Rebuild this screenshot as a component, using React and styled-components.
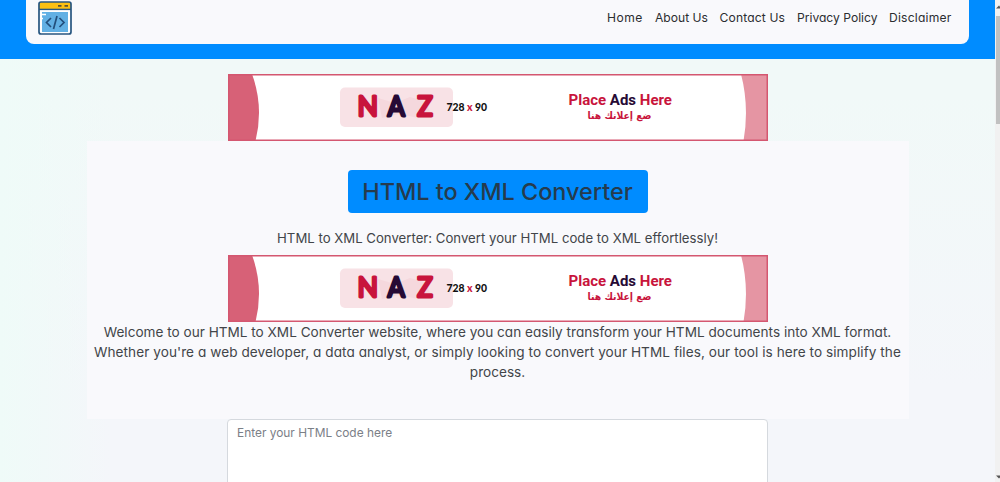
import React from "react";
import styled, { createGlobalStyle } from "styled-components";

const theme = {
  blue: "#008cff",
  light: "#f9f9fc",
  text: "#424549",
  red: "#c8143c",
  navy: "#260a35",
};

const links = [
  { label: "Home", width: 36, spacing: 0.45 },
  { label: "About Us", width: 52.5, spacing: 0 },
  { label: "Contact Us", width: 65.5, spacing: 0.15 },
  { label: "Privacy Policy", width: 80, spacing: 0 },
  { label: "Disclaimer", width: 63, spacing: 0.22 },
];

const Logo = () => (
  <LogoSvg viewBox="0 0 34 34">
    <rect x="1" y="1" width="32" height="32" rx="2" fill="#fff" />
    <path d="M1 8V3Q1 1 3 1H31Q33 1 33 3V8Z" fill="#fcc012" />
    <rect x="4" y="11" width="26" height="20" fill="#62b0e4" />
    <path d="M2 13.5H8M2 17.5H5" stroke="#fff" strokeWidth="1.6" />
    <rect x="1" y="1" width="32" height="32" rx="2" fill="none" stroke="#285680" strokeWidth="1.7" />
    <path d="M1 8.4H33" stroke="#285680" strokeWidth="1.4" />
    <path d="M20 4.8H23.5M26.5 4.8H30" stroke="#5c5230" strokeWidth="1.8" />
    <path
      d="M13 17L8.5 21.5L13 26M21.5 17L26 21.5L21.5 26M19 15L15.5 28"
      fill="none"
      stroke="#234f7c"
      strokeWidth="1.7"
    />
  </LogoSvg>
);

const AdBanner = () => (
  <BannerSvg viewBox="0 0 540 67">
    <rect width="540" height="67" fill="#fff" />
    <path d="M0 0H24Q36 33 27.5 67H0Z" fill="#d76177" />
    <path d="M540 0H513Q521.5 33 515.5 67H540Z" fill="#e595a3" />
    <rect x="112" y="13.5" width="113" height="39.5" rx="5" fill="#f8e2e6" />
    <path d="M150 24L167 29L182 23L196 27L203 39L190 44L171 40L154 44Z" fill="#f5d8dd" />
    <AdLetter x="129.5" y="42" textLength="20.5" lengthAdjust="spacingAndGlyphs">N</AdLetter>
    <AdLetter x="159.7" y="42" textLength="17" lengthAdjust="spacingAndGlyphs" $dark>A</AdLetter>
    <AdLetter x="189.2" y="42" textLength="15.5" lengthAdjust="spacingAndGlyphs">Z</AdLetter>
    <AdSize x="218.5" y="37.2" textLength="40.5" lengthAdjust="spacingAndGlyphs">
      728 <tspan fill={theme.red}>x</tspan> 90
    </AdSize>
    <AdTitle x="340.5" y="31.3" textLength="103.5" lengthAdjust="spacingAndGlyphs">
      Place <tspan fill={theme.navy}>Ads</tspan> Here
    </AdTitle>
    <AdArabic x="391.5" y="45" textLength="64" lengthAdjust="spacingAndGlyphs">
      ضع إعلانك هنا
    </AdArabic>
    <rect x=".75" y=".75" width="538.5" height="65.5" fill="none" stroke="#d45770" strokeWidth="1.5" />
  </BannerSvg>
);

const App = () => {
  return (
    <Screen>
      <GlobalStyle />
      <Page>
        <Header>
          <Navbar>
            <Logo />
            <NavList>
              {links.map((link) => (
                <NavLink key={link.label} $width={link.width} $spacing={link.spacing}>
                  {link.label}
                </NavLink>
              ))}
            </NavList>
          </Navbar>
        </Header>
        <Main>
          <AdBanner />
          <Card>
            <Title>HTML to XML Converter</Title>
            <SubTitle>
              HTML to XML Converter: Convert your HTML code to XML effortlessly!
            </SubTitle>
            <AdBanner />
            <Intro>
              <Line>
                Welcome to our HTML to XML Converter website, where you can easily
                transform your HTML documents into XML format.
              </Line>
              <Line $spacing={0.06}>
                Whether you're a web developer, a data analyst, or simply looking to
                convert your HTML files, our tool is here to simplify the
              </Line>
              <Line>process.</Line>
            </Intro>
          </Card>
          <CodeInput placeholder="Enter your HTML code here" />
        </Main>
      </Page>
      <ScrollTrack>
        <ScrollArrow viewBox="0 0 4 4">
          <path d="M0 3.5L3 .5L4 1.5V3.5Z" fill="#555" />
        </ScrollArrow>
        <ScrollThumb />
        <ScrollArrow viewBox="0 0 4 4">
          <path d="M0 .5H4V2.5L3 3.5Z" fill="#555" />
        </ScrollArrow>
      </ScrollTrack>
    </Screen>
  );
};

const GlobalStyle = createGlobalStyle`
  * {
    box-sizing: border-box;
  }
  body {
    margin: 0;
    overflow: hidden;
    color: ${theme.text};
    font-family: Inter, "Noto Sans", sans-serif;
    font-feature-settings: "cv11";
  }
`;

const Screen = styled.div`
  display: flex;
  width: 1000px;
  height: 482px;
  overflow: hidden;
`;

const Page = styled.div`
  width: 995px;
  height: 482px;
  overflow: hidden;
  background:
    linear-gradient(90deg, #effbf8 0, #effbf800 110px),
    linear-gradient(180deg, #f1f9f8 20%, #f4f6fa 80%);
`;

const Header = styled.header`
  height: 59px;
  padding: 0 26px;
  background: ${theme.blue};
`;

const Navbar = styled.nav`
  display: flex;
  justify-content: space-between;
  align-items: flex-start;
  height: 44px;
  padding: 0 17px 0 12px;
  border-radius: 0 0 8px 8px;
  background: ${theme.light};
`;

const LogoSvg = styled.svg`
  width: 34px;
  height: 34px;
  margin-top: 1px;
`;

const NavList = styled.div`
  display: flex;
  gap: 12px;
  margin-top: 9px;
`;

const NavLink = styled.a`
  width: ${(props) => props.$width}px;
  color: #2b2d30;
  font-size: 12.1px;
  line-height: 18px;
  letter-spacing: ${(props) => props.$spacing}px;
  white-space: nowrap;
`;

const Main = styled.main`
  display: flex;
  flex-direction: column;
  align-items: center;
  padding-top: 15px;
`;

const BannerSvg = styled.svg`
  display: block;
  flex: none;
  width: 540px;
  height: 67px;
`;

const AdLetter = styled.text`
  font-family: Lato, sans-serif;
  font-size: 27px;
  font-weight: 400;
  fill: ${(props) => (props.$dark ? theme.navy : theme.red)};
  stroke: ${(props) => (props.$dark ? theme.navy : theme.red)};
  stroke-width: 3px;
  stroke-linejoin: round;
`;

const AdSize = styled.text`
  font-family: Lato, sans-serif;
  font-size: 10.8px;
  font-weight: 900;
  fill: #111;
`;

const AdTitle = styled.text`
  font-family: Roboto, sans-serif;
  font-size: 15.5px;
  font-weight: 700;
  fill: ${theme.red};
`;

const AdArabic = styled.text`
  font-family: "DejaVu Sans", sans-serif;
  font-size: 10px;
  font-weight: 700;
  text-anchor: middle;
  direction: rtl;
  fill: ${theme.red};
`;

const Card = styled.section`
  display: flex;
  flex-direction: column;
  align-items: center;
  width: 822px;
  height: 278px;
  background: ${theme.light};
`;

const Title = styled.h1`
  width: 300px;
  height: 43px;
  margin: 29px 0 15px;
  border-radius: 4px;
  background: ${theme.blue};
  color: #263b4d;
  font-size: 23.4px;
  font-weight: 500;
  line-height: 43px;
  text-align: center;
  white-space: nowrap;
`;

const SubTitle = styled.p`
  height: 20px;
  margin: 0 0 7px;
  font-size: 13.2px;
  line-height: 20px;
  white-space: nowrap;
`;

const Intro = styled.div`
  text-align: center;
`;

const Line = styled.p`
  margin: 0;
  font-size: 13.6px;
  line-height: 20px;
  letter-spacing: ${(props) => props.$spacing || 0}px;
  white-space: nowrap;
`;

const CodeInput = styled.textarea`
  width: 541px;
  height: 120px;
  padding: 4px 9px;
  border: 1px solid #d5d9de;
  border-radius: 4px;
  outline: none;
  resize: none;
  background: #fff;
  font-family: inherit;
  font-feature-settings: inherit;
  font-size: 11.9px;
  line-height: 18px;
  &::placeholder {
    color: #7b8087;
  }
`;

const ScrollTrack = styled.div`
  display: flex;
  flex-direction: column;
  align-items: flex-end;
  width: 5px;
  padding: 5px 0 3px;
  background: #f1f1f1;
`;

const ScrollArrow = styled.svg`
  width: 4px;
  height: 4px;
`;

const ScrollThumb = styled.div`
  width: 4px;
  height: 108px;
  margin: 7px 0 auto;
  background: #c1c1c1;
`;

export default App;
